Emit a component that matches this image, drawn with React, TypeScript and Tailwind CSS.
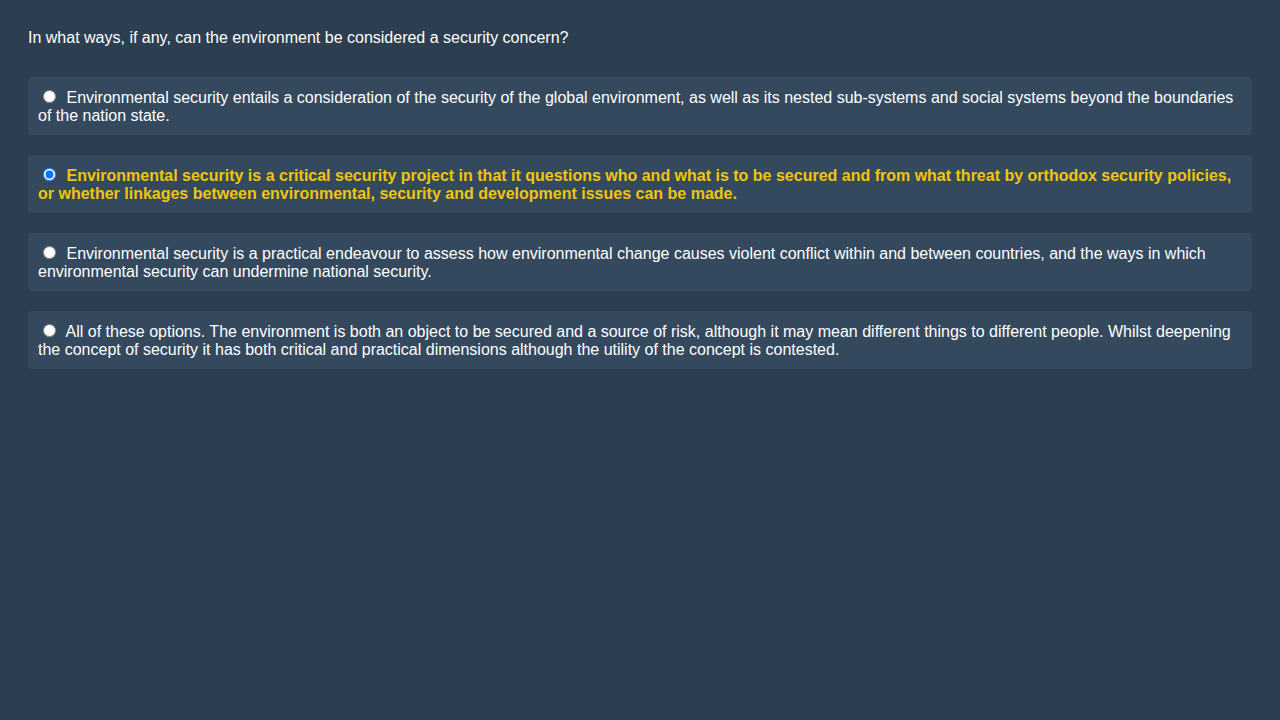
import React from "react";

const options = [
  "Environmental security entails a consideration of the security of the global environment, as well as its nested sub-systems and social systems beyond the boundaries of the nation state.",
  "Environmental security is a critical security project in that it questions who and what is to be secured and from what threat by orthodox security policies, or whether linkages between environmental, security and development issues can be made.",
  "Environmental security is a practical endeavour to assess how environmental change causes violent conflict within and between countries, and the ways in which environmental security can undermine national security.",
  "All of these options. The environment is both an object to be secured and a source of risk, although it may mean different things to different people. Whilst deepening the concept of security it has both critical and practical dimensions although the utility of the concept is contested.",
];

export default function App() {
  const selected = 1;
  return (
    <div
      className="min-h-screen bg-[#2c3e50] p-[28px] text-white text-[16px] leading-[normal]"
      style={{ fontFamily: '"Liberation Sans", Arial, sans-serif' }}
    >
      <p className="pt-[1px] mb-[30px]">In what ways, if any, can the environment be considered a security concern?</p>
      <div className="flex flex-col gap-[20px]">
        {options.map((o, i) => (
          <label
            key={i}
            className={
              "block bg-[#34495e] rounded-[4px] p-[10px] " +
              (i === selected ? "text-[#f1c40f] font-bold" : "text-white")
            }
          >
            <input
              type="radio"
              name="q"
              defaultChecked={i === selected}
              className="m-[3px_6px_0_5px] w-[13px] h-[13px] align-baseline"
            />{" "}
            {o}
          </label>
        ))}
      </div>
    </div>
  );
}
